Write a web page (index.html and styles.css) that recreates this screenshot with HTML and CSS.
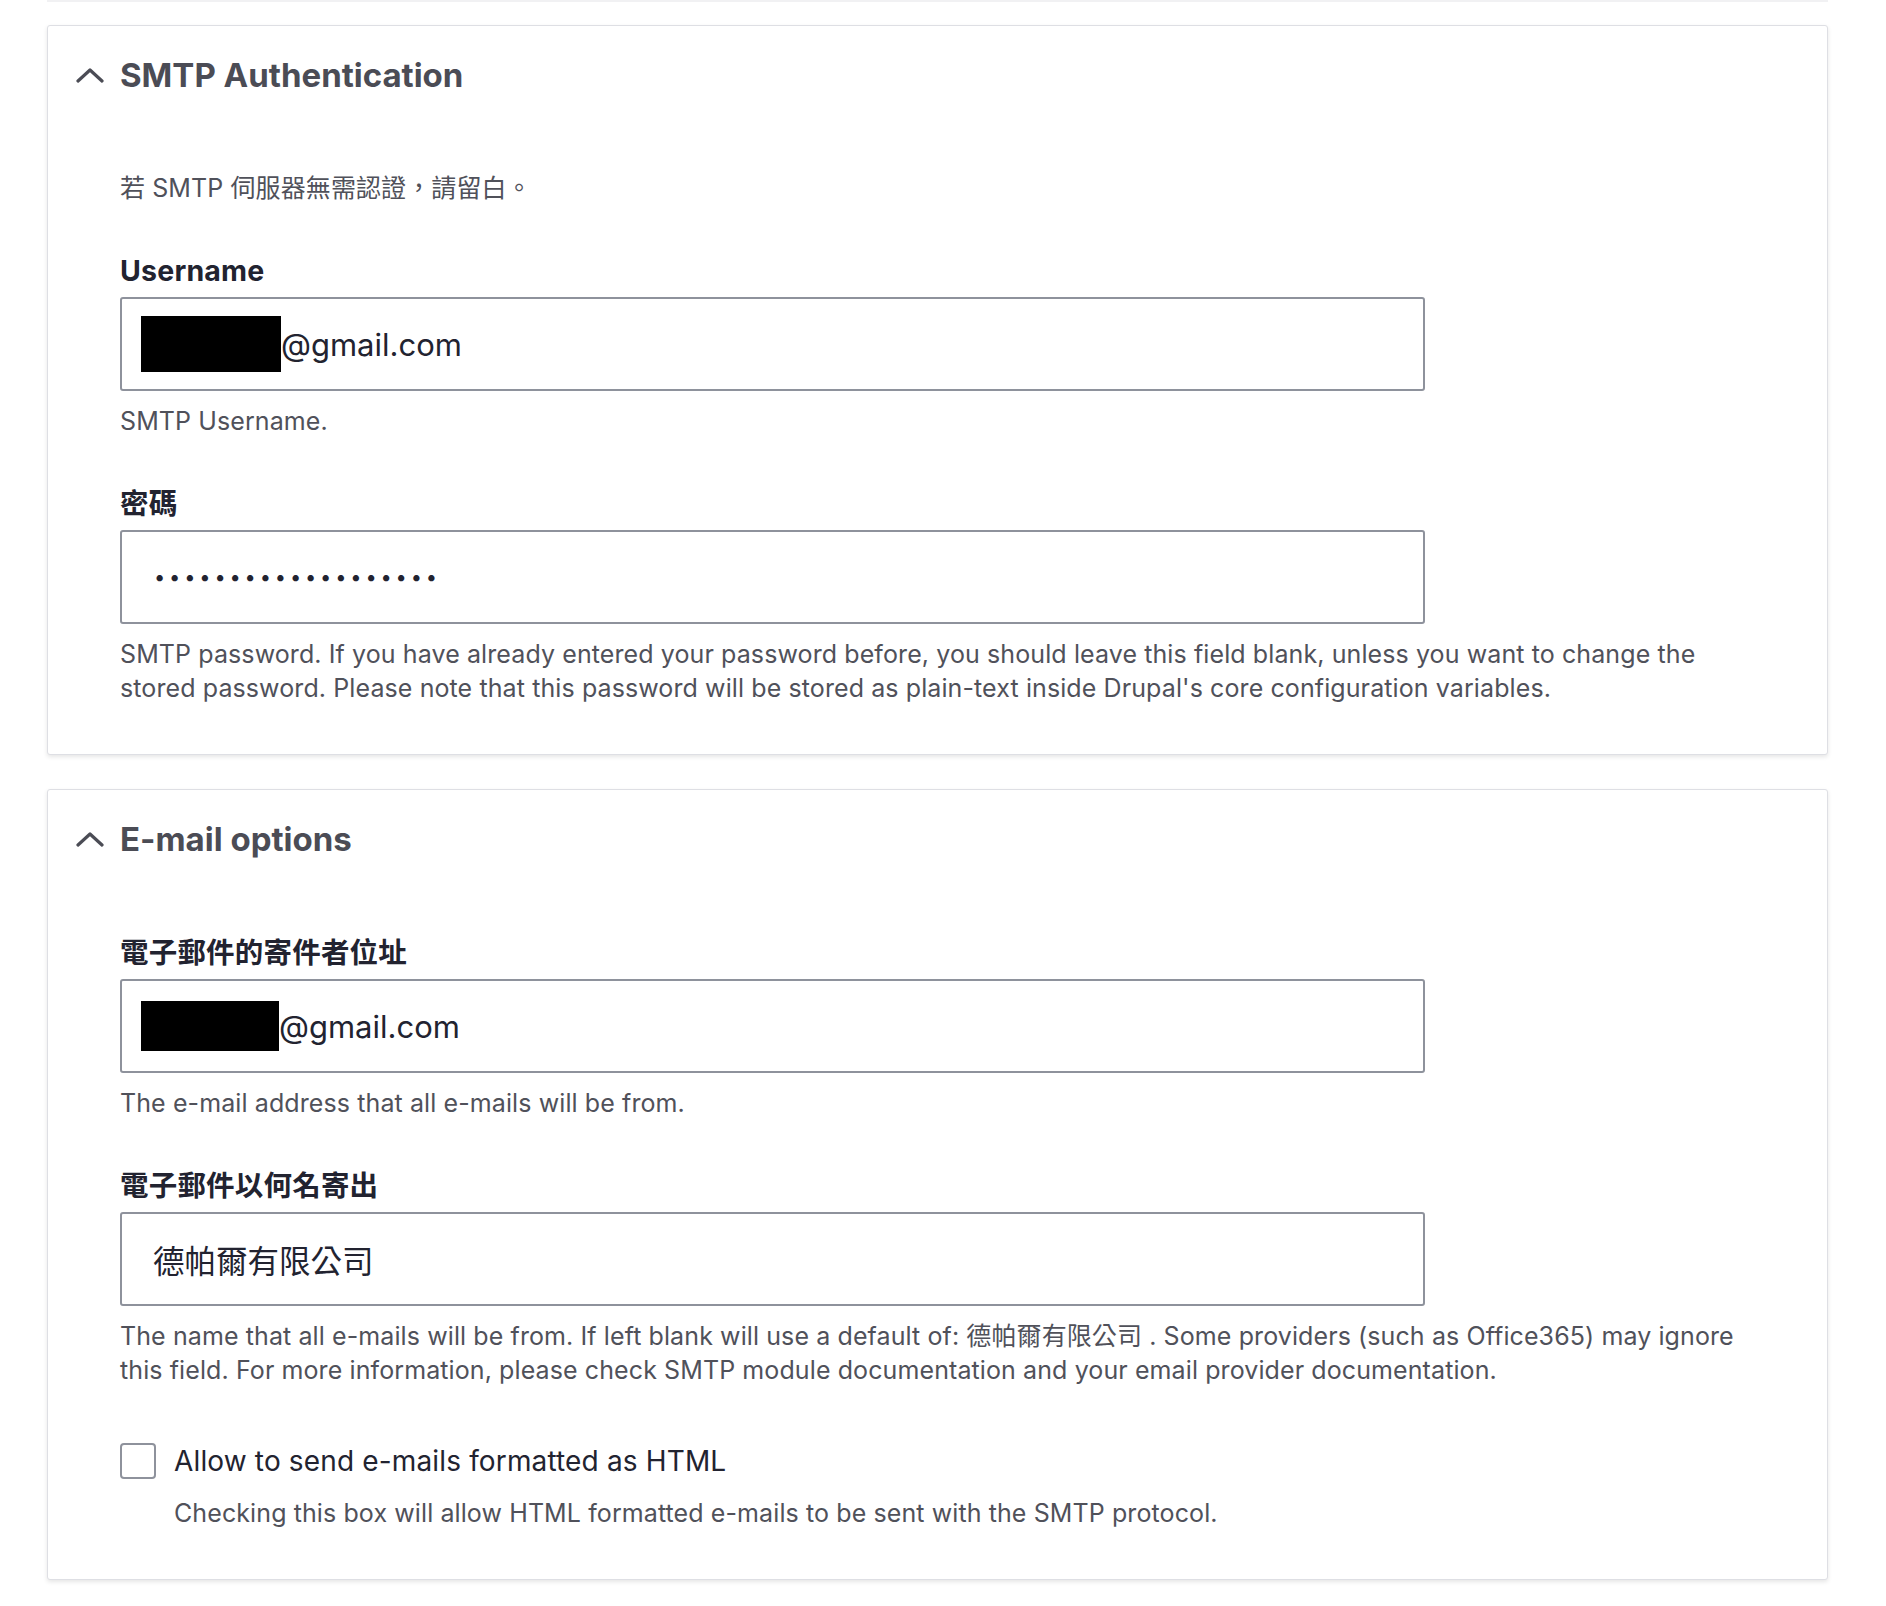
FILE: index.html
```html
<!DOCTYPE html>
<html lang="zh-Hant">
<head>
<meta charset="utf-8">
<title>SMTP settings</title>
<link rel="stylesheet" href="styles.css">
</head>
<body>
<div class="page">
  <div class="prev-edge"></div>

  <section class="card">
    <div class="summary">
      <svg class="chevron" width="28" height="16" viewBox="0 0 28 16"><path d="M2 14 L14 3 L26 14" fill="none" stroke="#4b4c55" stroke-width="3.2" stroke-linecap="round" stroke-linejoin="round"/></svg>
      <h2 class="title">SMTP Authentication</h2>
    </div>
    <div class="content">
      <p class="desc">若 SMTP 伺服器無需認證，請留白。</p>
      <div class="item">
        <div class="label">Username</div>
        <div class="input"><span class="redact redact-1"></span>@gmail.com</div>
        <div class="desc help">SMTP Username.</div>
      </div>
      <div class="item">
        <div class="label">密碼</div>
        <div class="input"><span class="dots">•••••••••••••••••••</span></div>
        <div class="desc help">SMTP password. If you have already entered your password before, you should leave this field blank, unless you want to change the stored password. Please note that this password will be stored as plain-text inside Drupal's core configuration variables.</div>
      </div>
    </div>
  </section>

  <section class="card">
    <div class="summary">
      <svg class="chevron" width="28" height="16" viewBox="0 0 28 16"><path d="M2 14 L14 3 L26 14" fill="none" stroke="#4b4c55" stroke-width="3.2" stroke-linecap="round" stroke-linejoin="round"/></svg>
      <h2 class="title">E-mail options</h2>
    </div>
    <div class="content">
      <div class="item first">
        <div class="label">電子郵件的寄件者位址</div>
        <div class="input"><span class="redact redact-2"></span>@gmail.com</div>
        <div class="desc help">The e-mail address that all e-mails will be from.</div>
      </div>
      <div class="item">
        <div class="label">電子郵件以何名寄出</div>
        <div class="input"><span class="cjk-value">德帕爾有限公司</span></div>
        <div class="desc help">The name that all e-mails will be from. If left blank will use a default of: 德帕爾有限公司 . Some providers (such as Office365) may ignore this field. For more information, please check SMTP module documentation and your email provider documentation.</div>
      </div>
      <div class="item check-item">
        <div class="check-row">
          <span class="checkbox"></span>
          <span class="check-label">Allow to send e-mails formatted as HTML</span>
        </div>
        <div class="desc check-desc">Checking this box will allow HTML formatted e-mails to be sent with the SMTP protocol.</div>
      </div>
    </div>
  </section>
</div>
</body>
</html>
```

FILE: styles.css
```css
html, body {
  margin: 0;
  padding: 0;
  background: #ffffff;
}

body {
  font-family: Inter, "Noto Sans CJK TC", "Noto Sans", sans-serif;
  color: #222330;
}

.page {
  width: 1781px;
  margin-left: 47px;
}

.prev-edge {
  height: 2px;
  background: #f1f1f3;
  margin-bottom: 23px;
}

.card {
  border: 1px solid #dedfe4;
  border-radius: 3px;
  box-shadow: 0 2px 4px rgba(0, 0, 0, 0.1);
  background: #fff;
  margin-bottom: 34px;
  padding-bottom: 49px;
}

.summary {
  display: flex;
  align-items: center;
  padding: 29px 0 0 28px;
  height: 40px;
}

.chevron {
  display: block;
  width: 28px;
  height: 16px;
  margin-right: 16px;
}

.title {
  margin: 0;
  font-size: 33px;
  line-height: 40px;
  font-weight: 700;
  color: #4b4c55;
  letter-spacing: 0;
}

.content {
  padding: 76px 73px 0 72px;
  display: flex;
  flex-direction: column;
}

.desc {
  margin: 0;
  font-size: 25px;
  line-height: 34px;
  color: #50515a;
  letter-spacing: 0.1px;
}

.item {
  margin-top: 48px;
  display: flex;
  flex-direction: column;
}

.item.first {
  margin-top: 0;
}

.label {
  font-size: 28.5px;
  line-height: 36px;
  font-weight: 700;
  color: #222330;
  letter-spacing: 0.2px;
  margin-bottom: 8px;
}

.input {
  box-sizing: border-box;
  width: 1305px;
  height: 94px;
  border: 2px solid #8e929c;
  border-radius: 3px;
  display: flex;
  align-items: center;
  padding-left: 19px;
  font-size: 31px;
  color: #222330;
}

.redact {
  display: inline-block;
  background: #000;
  height: 56px;
  width: 140px;
}

.redact-2 {
  height: 50px;
  width: 138px;
}

.dots {
  font-size: 20px;
  letter-spacing: 3.85px;
  padding-left: 13px;
  color: #222330;
}

.cjk-value {
  padding-left: 12px;
  font-family: "Noto Sans CJK TC", sans-serif;
  font-size: 31.5px;
}

.help {
  margin-top: 13px;
}

.check-item {
  margin-top: 56px;
}

.check-row {
  display: flex;
  align-items: center;
}

.checkbox {
  box-sizing: border-box;
  width: 36px;
  height: 36px;
  border: 2px solid #8e929c;
  border-radius: 4px;
  margin-right: 18px;
}

.check-label {
  font-size: 28px;
  line-height: 36px;
  letter-spacing: 0.15px;
  color: #222330;
}

.check-desc {
  margin-top: 17px;
  padding-left: 54px;
}
```
